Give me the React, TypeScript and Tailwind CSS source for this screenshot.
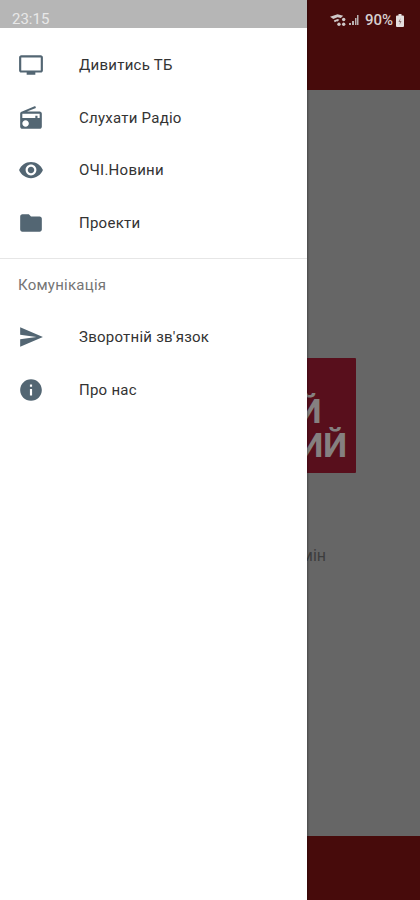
import React from 'react';

const paths = {
  tv: 'M21 3H3c-1.1 0-2 .9-2 2v12c0 1.1.9 2 2 2h5v2h8v-2h5c1.1 0 1.99-.9 1.99-2L23 5c0-1.1-.9-2-2-2zm0 14H3V5h18v12z',
  radio: 'M3.24 6.15C2.51 6.43 2 7.17 2 8v12c0 1.1.89 2 2 2h16c1.11 0 2-.9 2-2V8c0-1.11-.89-2-2-2H8.3l8.26-3.34L15.88 1 3.24 6.15zM7 20c-1.66 0-3-1.34-3-3s1.34-3 3-3 3 1.34 3 3-1.34 3-3 3zm13-8h-2v-2h-2v2H4V8h16v4z',
  eye: 'M12 4.5C7 4.5 2.73 7.61 1 12c1.73 4.39 6 7.5 11 7.5s9.27-3.11 11-7.5c-1.73-4.39-6-7.5-11-7.5zM12 17c-2.76 0-5-2.24-5-5s2.24-5 5-5 5 2.24 5 5-2.24 5-5 5zm0-8c-1.66 0-3 1.34-3 3s1.34 3 3 3 3-1.34 3-3-1.34-3-3-3z',
  folder: 'M10 4H4c-1.1 0-1.99.9-1.99 2L2 18c0 1.1.9 2 2 2h16c1.1 0 2-.9 2-2V8c0-1.1-.9-2-2-2h-8l-2-2z',
  send: 'M2.01 21L23 12 2.01 3 2 10l15 2-15 2z',
  info: 'M12 2C6.48 2 2 6.48 2 12s4.48 10 10 10 10-4.48 10-10S17.52 2 12 2zm1 15h-2v-6h2v6zm0-8h-2V7h2v2z',
};

const MenuItem: React.FC<{ icon: string; label: string }> = ({ icon, label }) => (
  <div className="flex h-[52.5px] items-center pl-[18px]">
    <svg viewBox="0 0 24 24" className="h-[26px] w-[26px] fill-[#536673]">
      <path d={icon} />
    </svg>
    <span className="ml-[35px] text-[15px] tracking-[0.25px] text-[#333333]">{label}</span>
  </div>
);

const App: React.FC = () => {
  return (
    <div className="relative flex h-[900px] w-[420px] flex-col overflow-hidden bg-[#666666] font-['Roboto',sans-serif]">
      {/* Page behind the drawer */}
      <div className="flex h-[90px] shrink-0 items-start justify-end bg-[#470b0b] pr-[16px] pt-[12px]">
        <div className="flex items-center text-[#d8d0d0]">
          <svg viewBox="0 0 18 14" className="h-[14px] w-[17px] fill-[#cfc8c8]">
            <path d="M0 3.500 8 1l6 1.500-2.500 2.500L8 4 3.500 6zM4 7.500 8 6l2 .7-2 2-1-.3-2 1z" />
            <circle cx="9.500" cy="11.500" r="1.800" />
            <circle cx="14.500" cy="6.500" r="1.800" />
            <circle cx="14.500" cy="11.500" r="1.800" />
          </svg>
          <svg viewBox="0 0 10 12" className="ml-[2px] h-[12px] w-[10px] fill-[#b9b2b2]">
            <path d="M0 9h2v2H0zM3 7h2v4H3zM6 4h1.500v7H6zM8 1h1.500v10H8z" />
          </svg>
          <span className="ml-[6px] text-[15px] font-medium leading-[16px]">90%</span>
          <svg viewBox="0 0 8 13" className="ml-[3px] h-[13px] w-[8px] fill-[#e4dede]">
            <path d="M2.500 0h3v1.500H7a1 1 0 0 1 1 1V12a1 1 0 0 1-1 1H1a1 1 0 0 1-1-1V2.500a1 1 0 0 1 1-1h1.500z" />
            <path d="M4.500 4 2.500 8H4l-.5 3 2-4H4z" fill="#8a6f6f" />
          </svg>
        </div>
      </div>
      <div className="flex flex-1 flex-col items-center pt-[268px]">
        <div className="flex h-[115px] w-[292px] items-end justify-end rounded-[1px] bg-[#580f1c] pb-[11px] pr-[9px]">
          <div className="whitespace-pre text-right text-[34px] font-bold leading-[34px] text-[#858080]">{'Й   \nИЙ'}</div>
        </div>
        <div className="mt-[73px] w-[292px] pr-[30px] text-right text-[16px] leading-[20px] text-[#3d3d3d]">мін</div>
      </div>
      <div className="h-[64px] shrink-0 bg-[#470b0b]" />

      {/* Drawer */}
      <div className="absolute inset-y-0 left-0 w-[307px] bg-white shadow-[1px_0_2px_rgba(0,0,0,0.3)]">
        <div className="flex h-[28px] items-end bg-[#b6b6b6] pl-[12px] text-[15px] leading-[18px] text-[#e8e8e8]">23:15</div>
        <div className="pt-[11px]">
          <MenuItem icon={paths.tv} label="Дивитись ТБ" />
          <MenuItem icon={paths.radio} label="Слухати Радіо" />
          <MenuItem icon={paths.eye} label="ОЧІ.Новини" />
          <MenuItem icon={paths.folder} label="Проекти" />
        </div>
        <div className="mt-[9px] h-px bg-[#e6e6e6]" />
        <div className="flex h-[52px] items-center pl-[18px] text-[15px] tracking-[0.25px] text-[#757575]">Комунікація</div>
        <MenuItem icon={paths.send} label="Зворотній зв'язок" />
        <MenuItem icon={paths.info} label="Про нас" />
      </div>
    </div>
  );
};

export default App;
